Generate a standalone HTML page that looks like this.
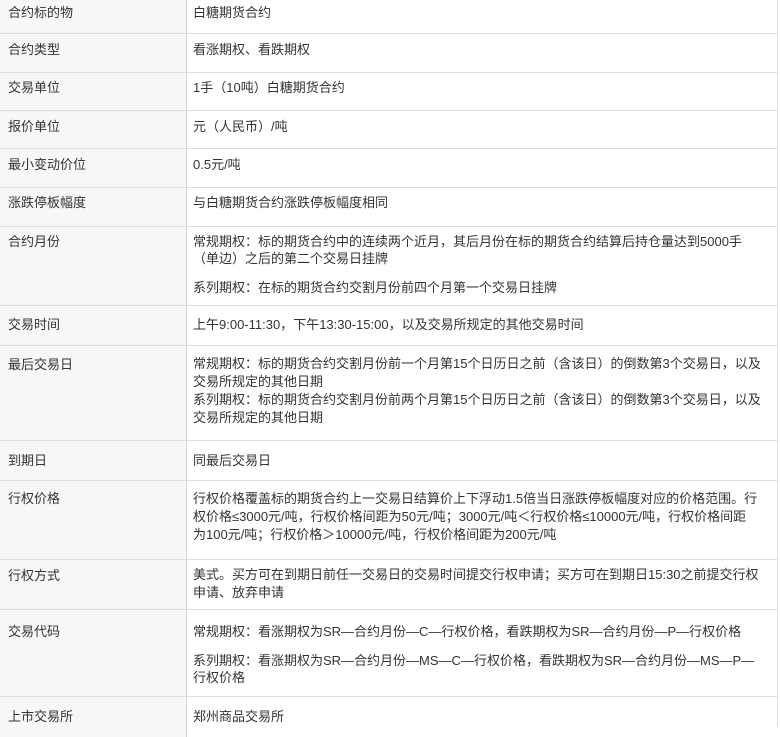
<!DOCTYPE html>
<html><head><meta charset="utf-8"><style>
body{margin:0;width:780px;height:726px;overflow:hidden;background:#fff;font-family:"Liberation Sans","Noto Sans CJK SC",sans-serif;font-size:13px;color:#333;}
.r{position:absolute;left:0;width:777px;border-bottom:1px solid #ddd;box-sizing:border-box}
.l{position:absolute;left:0;top:0;bottom:0;width:187px;background:#f7f7f7;border-right:1px solid #d6d6d6;box-sizing:border-box;padding:0 0 0 8px;line-height:17px;white-space:nowrap}
.v{position:absolute;left:193px;top:0;line-height:18px;white-space:nowrap}
.wrap{position:absolute;left:0;top:0;width:777px;height:726px;border-right:1px solid #ddd}
p{margin:0}
</style></head><body>
<div class="wrap"></div>
<div class="r" style="top:0;height:34px"><div class="l" style="padding-top:4px">合约标的物</div><div class="v" style="top:4px">白糖期货合约</div></div>
<div class="r" style="top:34px;height:39px"><div class="l" style="padding-top:7px">合约类型</div><div class="v" style="top:7px">看涨期权、看跌期权</div></div>
<div class="r" style="top:73px;height:38px"><div class="l" style="padding-top:6px">交易单位</div><div class="v" style="top:6px">1手（10吨）白糖期货合约</div></div>
<div class="r" style="top:111px;height:38px"><div class="l" style="padding-top:7px">报价单位</div><div class="v" style="top:7px">元（人民币）/吨</div></div>
<div class="r" style="top:149px;height:39px"><div class="l" style="padding-top:7px">最小变动价位</div><div class="v" style="top:7px">0.5元/吨</div></div>
<div class="r" style="top:188px;height:39px"><div class="l" style="padding-top:6px">涨跌停板幅度</div><div class="v" style="top:6px">与白糖期货合约涨跌停板幅度相同</div></div>
<div class="r" style="top:227px;height:79px"><div class="l" style="padding-top:6px">合约月份</div><div class="v" style="top:6px;line-height:17px"><p>常规期权：标的期货合约中的连续两个近月，其后月份在标的期货合约结算后持仓量达到5000手<br>（单边）之后的第二个交易日挂牌</p><p style="margin-top:12px">系列期权：在标的期货合约交割月份前四个月第一个交易日挂牌</p></div></div>
<div class="r" style="top:306px;height:40px"><div class="l" style="padding-top:10px">交易时间</div><div class="v" style="top:10px">上午9:00-11:30，下午13:30-15:00，以及交易所规定的其他交易时间</div></div>
<div class="r" style="top:346px;height:95px"><div class="l" style="padding-top:10px">最后交易日</div><div class="v" style="top:9px;line-height:18px">常规期权：标的期货合约交割月份前一个月第15个日历日之前（含该日）的倒数第3个交易日，以及<br>交易所规定的其他日期<br>系列期权：标的期货合约交割月份前两个月第15个日历日之前（含该日）的倒数第3个交易日，以及<br>交易所规定的其他日期</div></div>
<div class="r" style="top:441px;height:40px"><div class="l" style="padding-top:11px">到期日</div><div class="v" style="top:11px">同最后交易日</div></div>
<div class="r" style="top:481px;height:79px"><div class="l" style="padding-top:9px">行权价格</div><div class="v" style="top:9px;line-height:18px">行权价格覆盖标的期货合约上一交易日结算价上下浮动1.5倍当日涨跌停板幅度对应的价格范围。行<br>权价格≤3000元/吨，行权价格间距为50元/吨；3000元/吨＜行权价格≤10000元/吨，行权价格间距<br>为100元/吨；行权价格＞10000元/吨，行权价格间距为200元/吨</div></div>
<div class="r" style="top:560px;height:50px"><div class="l" style="padding-top:7px">行权方式</div><div class="v" style="top:6px;line-height:18px">美式。买方可在到期日前任一交易日的交易时间提交行权申请；买方可在到期日15:30之前提交行权<br>申请、放弃申请</div></div>
<div class="r" style="top:610px;height:87px"><div class="l" style="padding-top:13px">交易代码</div><div class="v" style="top:13px;line-height:17px"><p>常规期权：看涨期权为SR—合约月份—C—行权价格，看跌期权为SR—合约月份—P—行权价格</p><p style="margin-top:12px">系列期权：看涨期权为SR—合约月份—MS—C—行权价格，看跌期权为SR—合约月份—MS—P—<br>行权价格</p></div></div>
<div class="r" style="top:697px;height:40px;border-bottom:none"><div class="l" style="padding-top:11px">上市交易所</div><div class="v" style="top:11px">郑州商品交易所</div></div>
</body></html>
